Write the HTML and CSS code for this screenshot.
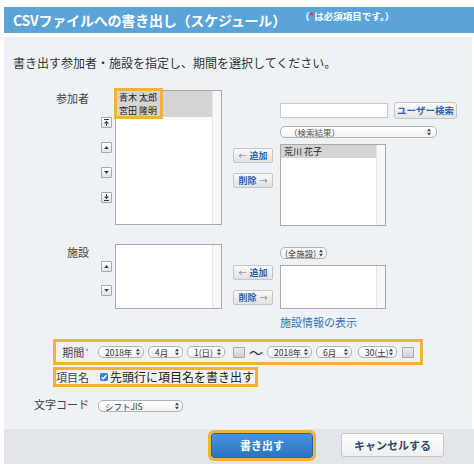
FILE: index.html
```html
<!DOCTYPE html>
<html lang="ja">
<head>
<meta charset="utf-8">
<title>CSVファイルへの書き出し</title>
<link rel="stylesheet" href="styles.css">
</head>
<body>
<div class="dialog">
  <div class="header">
    <h1 class="title">CSVファイルへの書き出し（スケジュール）</h1>
    <span class="req">（<span class="ast">*</span>は必須項目です。）</span>
  </div>

  <div class="panel">
    <p class="intro">書き出す参加者・施設を指定し、期間を選択してください。</p>

    <div class="row row-members">
      <div class="label">参加者</div>
      <div class="picker">
        <div class="arrows arrows-members">
          <span class="abtn"><svg viewBox="0 0 7 7"><rect x="1" y="0" width="5" height="1" fill="#2f3a4a"/><polygon points="1,4.5 3.5,1.8 6,4.5" fill="#2f3a4a"/><rect x="3" y="4.5" width="1" height="2.5" fill="#2f3a4a"/></svg></span>
          <span class="abtn"><svg viewBox="0 0 7 7"><polygon points="1.2,5 3.5,2 5.8,5" fill="#2f3a4a"/></svg></span>
          <span class="abtn"><svg viewBox="0 0 7 7"><polygon points="1.2,2 3.5,5 5.8,2" fill="#2f3a4a"/></svg></span>
          <span class="abtn"><svg viewBox="0 0 7 7"><rect x="3" y="0" width="1" height="2.5" fill="#2f3a4a"/><polygon points="1,2.5 3.5,5.2 6,2.5" fill="#2f3a4a"/><rect x="1" y="6" width="5" height="1" fill="#2f3a4a"/></svg></span>
        </div>
        <div class="list list-members">
          <div class="items">
            <div class="item sel">青木 太郎</div>
            <div class="item sel">宮田 隆明</div>
          </div>
          <div class="scroll"></div>
          <div class="highlight"></div>
        </div>
      </div>
      <div class="mid mid-members">
        <span class="mbtn"><span class="arr">←</span><b>追加</b></span>
        <span class="mbtn"><b>削除</b><span class="arr">→</span></span>
      </div>
      <div class="right right-members">
        <div class="search">
          <span class="input"></span>
          <span class="btn-search">ユーザー検索</span>
        </div>
        <span class="select select-result"><span class="val muted">（検索結果）</span><svg class="ud" viewBox="0 0 4 8"><polygon points="0,3.2 2,0.4 4,3.2" fill="#444"/><polygon points="0,4.8 2,7.6 4,4.8" fill="#444"/></svg></span>
        <div class="list list-result">
          <div class="items">
            <div class="item sel">荒川 花子</div>
          </div>
          <div class="scroll"></div>
        </div>
      </div>
    </div>

    <div class="row row-fac">
      <div class="label">施設</div>
      <div class="picker">
        <div class="arrows arrows-fac">
          <span class="abtn"><svg viewBox="0 0 7 7"><polygon points="1.2,5 3.5,2 5.8,5" fill="#2f3a4a"/></svg></span>
          <span class="abtn"><svg viewBox="0 0 7 7"><polygon points="1.2,2 3.5,5 5.8,2" fill="#2f3a4a"/></svg></span>
        </div>
        <div class="list list-fac">
          <div class="items"></div>
          <div class="scroll"></div>
        </div>
      </div>
      <div class="mid mid-fac">
        <span class="mbtn"><span class="arr">←</span><b>追加</b></span>
        <span class="mbtn"><b>削除</b><span class="arr">→</span></span>
      </div>
      <div class="right right-fac">
        <span class="select select-all"><span class="val">(全施設)</span><svg class="ud" viewBox="0 0 4 8"><polygon points="0,3.2 2,0.4 4,3.2" fill="#444"/><polygon points="0,4.8 2,7.6 4,4.8" fill="#444"/></svg></span>
        <div class="list list-facres">
          <div class="items"></div>
          <div class="scroll"></div>
        </div>
        <a class="link">施設情報の表示</a>
      </div>
    </div>

    <div class="boxrow period">
      <div class="label">期間<span class="ast">*</span></div>
      <div class="fields">
        <span class="select w-year"><span class="val">2018年</span><svg class="ud" viewBox="0 0 4 8"><polygon points="0,3.2 2,0.4 4,3.2" fill="#444"/><polygon points="0,4.8 2,7.6 4,4.8" fill="#444"/></svg></span>
        <span class="select w-month"><span class="val">4月</span><svg class="ud" viewBox="0 0 4 8"><polygon points="0,3.2 2,0.4 4,3.2" fill="#444"/><polygon points="0,4.8 2,7.6 4,4.8" fill="#444"/></svg></span>
        <span class="select w-day"><span class="val">1(日)</span><svg class="ud" viewBox="0 0 4 8"><polygon points="0,3.2 2,0.4 4,3.2" fill="#444"/><polygon points="0,4.8 2,7.6 4,4.8" fill="#444"/></svg></span>
        <span class="cal"></span>
        <span class="tilde">〜</span>
        <span class="select w-year2"><span class="val">2018年</span><svg class="ud" viewBox="0 0 4 8"><polygon points="0,3.2 2,0.4 4,3.2" fill="#444"/><polygon points="0,4.8 2,7.6 4,4.8" fill="#444"/></svg></span>
        <span class="select w-month2"><span class="val">6月</span><svg class="ud" viewBox="0 0 4 8"><polygon points="0,3.2 2,0.4 4,3.2" fill="#444"/><polygon points="0,4.8 2,7.6 4,4.8" fill="#444"/></svg></span>
        <span class="select w-day2"><span class="val">30(土)</span><svg class="ud" viewBox="0 0 4 8"><polygon points="0,3.2 2,0.4 4,3.2" fill="#444"/><polygon points="0,4.8 2,7.6 4,4.8" fill="#444"/></svg></span>
        <span class="cal cal2"></span>
      </div>
    </div>

    <div class="boxrow header-opt">
      <div class="label">項目名</div>
      <label class="check">
        <span class="box"><svg viewBox="0 0 8 8"><polyline points="1.6,4.2 3.3,5.8 6.4,2.2" fill="none" stroke="#fff" stroke-width="1.4"/></svg></span>
        <span class="check-text">先頭行に項目名を書き出す</span>
      </label>
    </div>

    <div class="row code">
      <div class="label">文字コード</div>
      <span class="select w-code"><span class="val">シフトJIS</span><svg class="ud" viewBox="0 0 4 8"><polygon points="0,3.2 2,0.4 4,3.2" fill="#444"/><polygon points="0,4.8 2,7.6 4,4.8" fill="#444"/></svg></span>
    </div>
  </div>

  <div class="footer">
    <span class="btn-primary">書き出す</span>
    <span class="btn-cancel">キャンセルする</span>
  </div>
</div>
</body>
</html>
```

FILE: styles.css
```css
* { box-sizing: border-box; }
html, body { margin: 0; padding: 0; background: #fff; }
body {
  font-family: "Noto Sans CJK JP", "Noto Sans", sans-serif;
  color: #333;
  font-size: 11px;
}

.dialog { padding: 7px 0 0 4px; }

/* header */
.header {
  height: 26px;
  background: #5aa4da;
  display: flex;
  align-items: center;
  padding-left: 9px;
}
.title {
  margin: 0;
  font-size: 14px;
  font-weight: bold;
  color: #fff;
  line-height: 18px;
  letter-spacing: -0.2px;
}
.req {
  align-self: flex-start;
  margin-top: 3px;
  margin-left: 14px;
  font-size: 9.5px;
  font-weight: bold;
  line-height: 12px;
  color: #fff;
}
.req .ast { color: #e0383c; }

/* panel */
.panel {
  margin-top: 4px;
  margin-right: 2px;
  background: #eef2f6;
  padding: 18px 0 17px;
}
.intro {
  margin: 0 0 19px 9px;
  font-size: 12px;
  line-height: 16px;
  color: #333;
}

.row { display: flex; align-items: flex-start; }
.label {
  flex: none;
  width: 85px;
  text-align: right;
  font-size: 11px;
  line-height: 14px;
  padding-top: 1px;
  color: #444;
}
.label .ast { color: #e0383c; font-size: 8px; vertical-align: top; margin-left: 1px; }

/* picker: arrows + list */
.picker { display: flex; align-items: center; margin-left: 12px; }
.arrows { display: flex; flex-direction: column; gap: 14px; width: 11px; }
.arrows-members { padding-top: 4px; }
.arrows-fac { padding-top: 3px; gap: 13px; }
.abtn {
  width: 11px;
  height: 11px;
  border: 1px solid #a8a8a8;
  border-radius: 1px;
  background: linear-gradient(#ffffff, #e2e2e2);
  display: flex;
  align-items: center;
  justify-content: center;
}
.abtn svg { width: 7px; height: 7px; display: block; }

.list {
  position: relative;
  display: flex;
  margin-left: 3px;
  width: 107px;
  background: #fff;
  border: 1px solid #a9a9a9;
}
.list-members { height: 135px; }
.list-fac { height: 65px; }
.items { flex: 1; }
.scroll { width: 9px; border-left: 1px solid #e6e6e6; background: #f7f7f7; }
.item {
  height: 13px;
  line-height: 13px;
  font-size: 9px;
  padding-left: 3px;
  color: #222;
  white-space: nowrap;
}
.item.sel { background: #d4d4d4; }
.highlight {
  position: absolute;
  left: -2px;
  top: -3px;
  width: 49px;
  height: 31px;
  border: 3px solid #f4b234;
}

/* middle buttons */
.mid { display: flex; flex-direction: column; gap: 10px; margin-left: 11px; }
.mid-members { margin-top: 58px; }
.mid-fac { margin-top: 21px; }
.mbtn {
  width: 40px;
  height: 15px;
  border: 1px solid #c6c6c6;
  border-radius: 2px;
  background: linear-gradient(#f9f9f9, #e1e1e1);
  display: flex;
  align-items: center;
  justify-content: center;
  gap: 3px;
  font-size: 9px;
  line-height: 13px;
}
.mbtn .arr { color: #777; font-size: 8px; }
.mbtn b { color: #2a64ae; }

/* right column */
.right { margin-left: 7px; display: flex; flex-direction: column; align-items: flex-start; }
.right-members { margin-top: 12px; }
.right-fac { margin-top: 3px; }
.search { display: flex; align-items: center; gap: 6px; }
.input { width: 108px; height: 15px; border: 1px solid #c9c9c9; background: #fff; }
.btn-search {
  width: 63px;
  height: 17px;
  border: 1px solid #c4c4c4;
  border-radius: 3px;
  background: linear-gradient(#fbfbfb, #e4e4e4);
  color: #2d64ac;
  font-weight: bold;
  font-size: 9.5px;
  line-height: 15px;
  text-align: center;
}
.list-result { margin-left: 0; margin-top: 6px; width: 106px; height: 82px; }
.list-facres { margin-left: 0; margin-top: 6px; width: 106px; height: 44px; }
.link {
  margin-top: 6px;
  font-size: 11px;
  line-height: 14px;
  color: #3672b9;
}

/* select look */
.select {
  display: inline-flex;
  align-items: center;
  justify-content: space-between;
  height: 12px;
  border: 1px solid #b2b2b2;
  border-radius: 5px;
  background: linear-gradient(#ffffff, #f2f2f2);
  font-size: 8.5px;
  line-height: 10px;
  padding: 0 3px 0 6px;
  color: #333;
  white-space: nowrap;
}
.select .muted { color: #555; }
.ud { width: 4px; height: 8px; flex: none; display: block; }
.select-result { width: 157px; margin-top: 7px; padding-left: 8px; padding-right: 5px; }
.select-all { width: 47px; padding-left: 4px; }

.row-fac { margin-top: 18px; }

/* boxed rows */
.boxrow {
  display: flex;
  align-items: center;
  width: max-content;
  margin-left: 49px;
  border: 3px solid #f4b234;
}
.boxrow .label { width: 33px; padding-top: 0; }
.period { height: 26px; margin-top: 10px; padding-right: 6px; }
.fields { display: flex; align-items: center; gap: 4px; margin-left: 9px; }
.w-year { width: 46px; }
.w-month { width: 35px; }
.w-day { width: 38px; }
.w-year2 { width: 45px; }
.w-month2 { width: 36px; }
.w-day2 { width: 39px; margin-left: 2px; }
.cal {
  width: 12px;
  height: 11px;
  border: 1px solid #a9a9a9;
  background: linear-gradient(#ececec, #d0d0d0);
  margin-left: 4px;
}
.cal2 { margin-left: 1px; }
.tilde { font-size: 14px; line-height: 14px; color: #333; width: 14px; text-align: center; }

.header-opt { height: 20px; margin-top: 2px; padding-right: 1px; }
.check { display: flex; align-items: center; margin-left: 11px; }
.box {
  width: 8px;
  height: 8px;
  border-radius: 2px;
  background: #3a7fd6;
  display: flex;
}
.box svg { width: 8px; height: 8px; display: block; }
.check-text { margin-left: 2px; font-size: 12px; line-height: 14px; color: #222; }

.code { margin-top: 13px; align-items: flex-start; }
.code .label { margin-top: -4px; }
.w-code { width: 85px; margin-left: 9px; }

/* footer */
.footer {
  height: 35px;
  background: #e2e6ea;
  display: flex;
  align-items: flex-start;
  padding: 4px 0 0 207px;
}
.btn-primary {
  width: 102px;
  height: 25px;
  border: 1px solid #2565a8;
  border-radius: 3px;
  background: linear-gradient(#4495dc, #2b74c0);
  outline: 3px solid #f4b234;
  color: #fff;
  font-weight: bold;
  font-size: 11px;
  line-height: 23px;
  text-align: center;
}
.btn-cancel {
  margin-left: 28px;
  width: 103px;
  height: 24px;
  border: 1px solid #c6c6c6;
  border-radius: 3px;
  background: linear-gradient(#ffffff, #efefef);
  color: #2d4a6b;
  font-weight: bold;
  font-size: 11px;
  line-height: 22px;
  text-align: center;
}
```
